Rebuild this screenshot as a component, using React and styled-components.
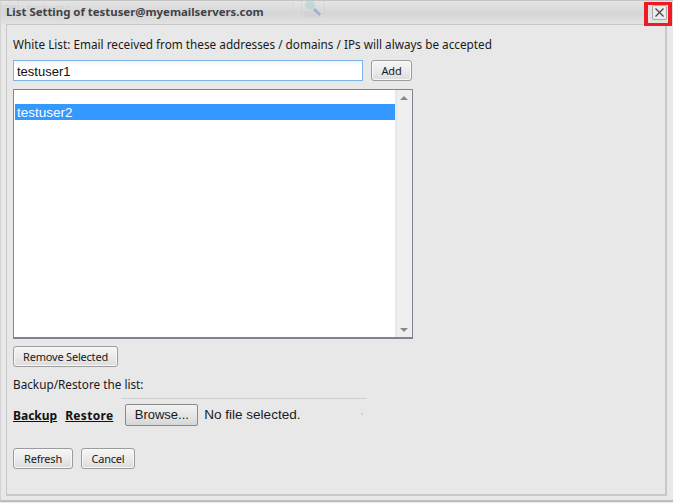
import React from 'react'
import styled, { createGlobalStyle } from 'styled-components'

const Global = createGlobalStyle`
    html, body {
        margin: 0;
        padding: 0;
        background: #e8e8e8;
    }
    * {
        box-sizing: border-box;
    }
`

const Dialog = styled.div`
    position: relative;
    width: 673px;
    height: 502px;
    overflow: hidden;
    background: #e8e8e8;
    border-top: 1px solid #c4c4c4;
    border-bottom: 2px solid #bdbdbd;
    border-left: 1px solid #d2d2d2;
    font-family: "Noto Sans", "DejaVu Sans", sans-serif;
    font-size: 12px;
    color: #1a1a1a;
`

const GhostLabel = styled.div`
    position: absolute;
    top: 0;
    left: -1px;
    color: #d2d2d2;
    font-size: 11px;
    line-height: 12px;
`

const GhostField = styled.div`
    position: absolute;
    top: -6px;
    left: 17px;
    width: 275px;
    height: 23px;
    padding: 6px 8px 0;
    border: 1px solid #d8d8d8;
    color: #d2d2d2;
    font-size: 11px;
    line-height: 12px;
`

const GhostIcon = styled.svg`
    position: absolute;
    top: -1px;
    left: 300px;
    width: 24px;
    height: 18px;
    opacity: 0.55;
`

const TitleBar = styled.div`
    height: 23px;
    display: flex;
    align-items: flex-start;
    justify-content: space-between;
    padding: 0 1px 0 5px;
    background: linear-gradient(#e4e4e4, #d6d6d6 55%, #e2e2e2);
`

const Title = styled.div`
    position: relative;
    z-index: 1;
    margin-top: 3px;
    font-weight: 700;
    font-size: 11.4px;
    line-height: 16px;
    color: #3f4247;
`

const CloseFrame = styled.div`
    width: 28px;
    height: 24px;
    flex: none;
    display: flex;
    align-items: flex-start;
    justify-content: flex-end;
    padding-right: 1px;
    border: 3px solid #ed1c24;
    border-width: 3px 4px;
    margin-top: 1px;
    position: relative;
    z-index: 1;
    background: #e2e2e2;
`

const CloseButton = styled.button`
    width: 15px;
    height: 15px;
    padding: 0;
    display: flex;
    align-items: center;
    justify-content: center;
    border: 1px solid #a8a8a8;
    border-radius: 2px;
    background: #ececec;
`

const Panel = styled.div`
    margin: 0 6px 0 5px;
    height: 472px;
    padding: 11px 6px 0 6px;
    border: 1px solid #c8c8c8;
    border-width: 1px 2px 2px 1px;
    background: #e8e8e8;
`

const Heading = styled.div`
    height: 24px;
    line-height: 16px;
    font-size: 11.75px;
    white-space: nowrap;
`

const AddRow = styled.div`
    display: flex;
    align-items: center;
    gap: 8px;
    height: 21px;
`

const TextInput = styled.input`
    width: 350px;
    height: 21px;
    padding: 1px 3px 0;
    border: 1px solid #7eb4ea;
    background: linear-gradient(#f4f4f4, #ffffff 30%);
    font-family: "Liberation Sans", sans-serif;
    font-size: 13px;
    color: #111;
    outline: none;
`

const Button = styled.button`
    height: 21px;
    width: ${p => p.$width}px;
    padding: 0;
    border: 1px solid #9c9c9c;
    border-radius: 3px;
    background: linear-gradient(#f6f6f6, #ebebeb 50%, #dcdcdc);
    box-shadow: inset 0 0 0 1px #f8f8f8;
    font-family: "Noto Sans", "DejaVu Sans", sans-serif;
    font-size: 11px;
    letter-spacing: -0.2px;
    color: #1a1a1a;
`

const ListBox = styled.div`
    display: flex;
    width: 400px;
    height: 250px;
    margin-top: 8px;
    border: 1px solid #7f8590;
    border-width: 1px 1px 2px 1px;
    background: #fff;
    font-family: "Liberation Sans", sans-serif;
    font-size: 13.5px;
`

const Items = styled.div`
    flex: 1;
    padding: 14px 0 0 1px;
`

const Item = styled.div`
    height: 16px;
    line-height: 17px;
    padding-left: 2px;
    background: ${p => (p.$selected ? '#3399ff' : 'transparent')};
    color: ${p => (p.$selected ? '#fff' : '#111')};
`

const ScrollTrack = styled.div`
    width: 17px;
    display: flex;
    flex-direction: column;
    align-items: center;
    justify-content: space-between;
    padding: 6px 0 5px;
    background: linear-gradient(90deg, #e6e6e6, #f0f0f0 25%, #eeeeee);
`

const Arrow = styled.div`
    width: 0;
    height: 0;
    border-left: 4px solid transparent;
    border-right: 4px solid transparent;
    border-bottom: ${p => (p.$down ? '0' : '4px solid #8a8a8a')};
    border-top: ${p => (p.$down ? '4px solid #8a8a8a' : '0')};
`

const RemoveRow = styled.div`
    margin-top: 7px;
    display: flex;
`

const Label = styled.div`
    margin-top: 9px;
    height: 16px;
    line-height: 16px;
    font-size: 11.75px;
`

const BackupRow = styled.div`
    position: relative;
    display: flex;
    align-items: center;
    margin-top: 6px;
    width: 354px;
    height: 28px;
`

const ActionLink = styled.a`
    margin-top: 6px;
    margin-right: ${p => p.$gap}px;
    font-weight: 700;
    font-size: 12px;
    letter-spacing: ${p => p.$spread || 0}px;
    text-decoration: underline;
    color: #111;
    cursor: pointer;
`

const FileBox = styled.div`
    display: flex;
    align-items: center;
    gap: 6px;
    flex: 1;
    height: 28px;
    margin-left: -4px;
    padding: 4px 0 0 4px;
    border-top: 1px solid #cfcfcf;
    font-family: "Liberation Sans", sans-serif;
    font-size: 13.5px;
`

const Speck = styled.div`
    position: absolute;
    top: 15px;
    right: 4px;
    width: 2px;
    height: 2px;
    background: #d0d0d0;
`

const BrowseButton = styled.button`
    width: 73px;
    height: 22px;
    padding: 0;
    border: 1px solid #8a8a8a;
    border-radius: 2px;
    background: linear-gradient(#f2f2f2, #e6e6e6 50%, #d6d6d6);
    font-family: "Liberation Sans", sans-serif;
    font-size: 13px;
    color: #1a1a1a;
`

const Footer = styled.div`
    display: flex;
    gap: 8px;
    margin-top: 22px;
`

export default () => (
    <Dialog>
        <Global />
        <TitleBar>
            <Title>List Setting of testuser@myemailservers.com</Title>
            <CloseFrame>
                <CloseButton aria-label="Close">
                    <svg width="11" height="11" viewBox="0 0 11 11">
                        <path d="M1.5 1.5l8 8M9.5 1.5l-8 8" stroke="#444" strokeWidth="1.2" />
                    </svg>
                </CloseButton>
            </CloseFrame>
        </TitleBar>
        <GhostLabel>me:</GhostLabel>
        <GhostField>testuser</GhostField>
        <GhostIcon viewBox="0 0 24 18">
            <rect x="0.5" y="0.5" width="23" height="16" rx="2" fill="none" stroke="#d0d0d0" />
            <circle cx="9" cy="5" r="5" fill="#9fd8d0" />
            <path d="M13 9l6 6" stroke="#7e8fc0" strokeWidth="3" />
            <path d="M3 12h10M3 15h12" stroke="#c0c0c0" />
        </GhostIcon>
        <Panel>
            <Heading>White List: Email received from these addresses / domains / IPs will always be accepted</Heading>
            <AddRow>
                <TextInput defaultValue="testuser1" />
                <Button $width={41}>Add</Button>
            </AddRow>
            <ListBox>
                <Items>
                    <Item $selected>testuser2</Item>
                </Items>
                <ScrollTrack>
                    <Arrow />
                    <Arrow $down />
                </ScrollTrack>
            </ListBox>
            <RemoveRow>
                <Button $width={105}>Remove Selected</Button>
            </RemoveRow>
            <Label>Backup/Restore the list:</Label>
            <BackupRow>
                <ActionLink $gap={8}>Backup</ActionLink>
                <ActionLink $gap={12} $spread={0.3}>Restore</ActionLink>
                <FileBox>
                    <BrowseButton>Browse...</BrowseButton>
                    <span>No file selected.</span>
                </FileBox>
                <Speck />
            </BackupRow>
            <Footer>
                <Button $width={60}>Refresh</Button>
                <Button $width={54}>Cancel</Button>
            </Footer>
        </Panel>
    </Dialog>
)
